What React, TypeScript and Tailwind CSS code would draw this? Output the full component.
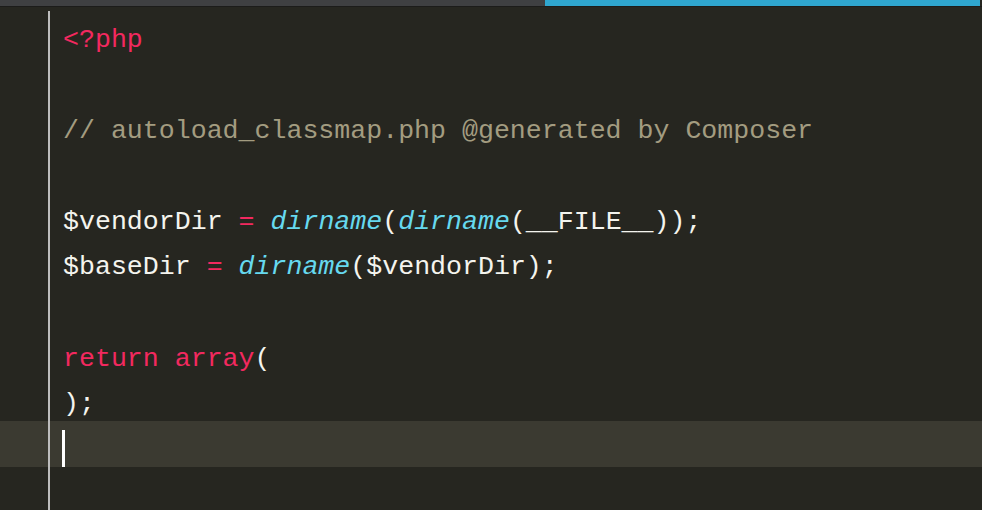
const KW = "text-[#f2295f]";
const FN = "text-[#66d9ef] italic";
const CM = "text-[#a39c80]";
const TX = "text-[#f4f4ee]";

type Tok = [string, string];

const lines: Tok[][] = [
  [[KW, "<?php"]],
  [],
  [[CM, "// autoload_classmap.php @generated by Composer"]],
  [],
  [
    [TX, "$vendorDir "],
    [KW, "="],
    [TX, " "],
    [FN, "dirname"],
    [TX, "("],
    [FN, "dirname"],
    [TX, "(__FILE__));"],
  ],
  [
    [TX, "$baseDir "],
    [KW, "="],
    [TX, " "],
    [FN, "dirname"],
    [TX, "($vendorDir);"],
  ],
  [],
  [
    [KW, "return"],
    [TX, " "],
    [KW, "array"],
    [TX, "("],
  ],
  [[TX, ");"]],
  [],
  [],
];

export default function App() {
  return (
    <div className="w-[982px] h-[510px] overflow-hidden bg-[#262620] flex flex-col">
      {/* tab strip */}
      <div className="h-[7px] flex shrink-0 border-b border-[#1c1c1a]">
        <div className="w-[545px] bg-[#3f4042]" />
        <div className="flex-1 bg-[#2fa6cf] mr-[2px]" />
      </div>

      {/* editor */}
      <div
        className="flex-1 pt-[4px] flex flex-col"
        style={{ fontFamily: '"Liberation Mono", "DejaVu Sans Mono", monospace' }}
      >
        {lines.map((toks, i) => {
          const current = i === 9;
          return (
            <div
              key={i}
              className={`flex h-[45.6px] shrink-0 ${current ? "bg-[#3b3a31]" : ""}`}
            >
              <div className="w-[50px] shrink-0 border-r-2 border-[#bdbdbd]" />
              <div className="pl-[13px] pt-[12px] flex items-center text-[26.6px] whitespace-pre leading-none relative">
                {toks.map(([cls, t], j) => (
                  <span key={j} className={cls}>
                    {t}
                  </span>
                ))}
                {current && (
                  <span className="absolute left-[12px] bottom-0 w-[3px] h-[37px] bg-white" />
                )}
              </div>
            </div>
          );
        })}
        <div className="flex-1 flex">
          <div className="w-[50px] border-r-2 border-[#bdbdbd]" />
        </div>
      </div>
    </div>
  );
}
